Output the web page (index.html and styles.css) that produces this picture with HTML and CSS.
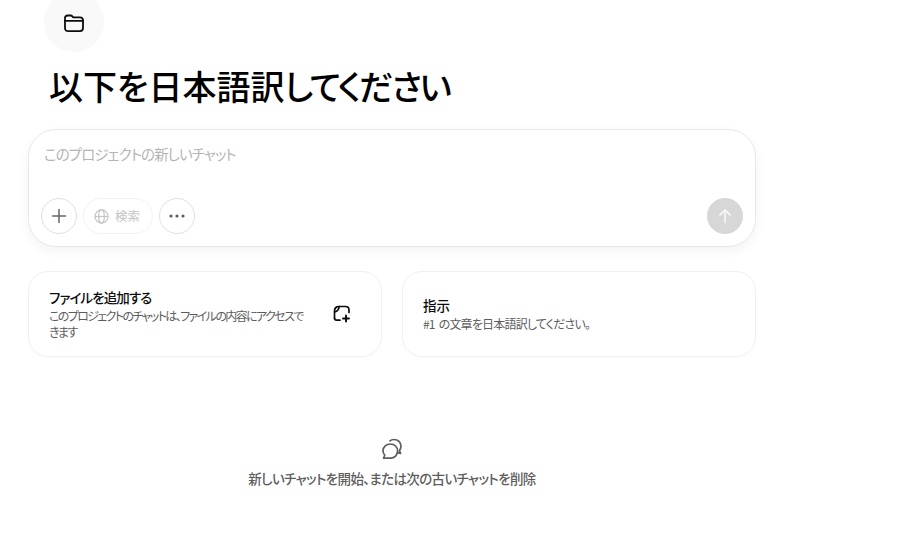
FILE: index.html
```html
<!DOCTYPE html>
<html lang="ja">
<head>
<meta charset="utf-8">
<title>以下を日本語訳してください</title>
<link rel="stylesheet" href="styles.css">
</head>
<body>
<main class="page">
  <div class="project-icon">
    <svg width="20" height="20" viewBox="0 -2.5 20 20" fill="none" stroke="#0d0d0d" stroke-width="1.8" stroke-linejoin="round" stroke-linecap="round"><path d="M1 3.6C1 2 2 1 3.6 1H6.6C7.4 1 7.9 1.3 8.4 1.9L9.2 2.8H16C17.8 2.8 19 4 19 5.8V13.6C19 15.6 17.8 16.6 16 16.6H4C2.2 16.6 1 15.6 1 13.6Z"/><path d="M1 6.4H19"/></svg>
  </div>
  <h1 class="title">以下を日本語訳<span class="kana">してください</span></h1>

  <section class="composer">
    <div class="placeholder">このプロジェクトの新しいチャット</div>
    <div class="toolbar">
      <button class="round-btn">
        <svg width="16" height="16" viewBox="0 0 16 16" fill="none" stroke="#666" stroke-width="1.5" stroke-linecap="round"><path d="M8 1.5V14.5M1.5 8H14.5"/></svg>
      </button>
      <button class="pill-btn">
        <svg width="15" height="15" viewBox="0 0 16 16" fill="none" stroke="#c4c4c4" stroke-width="1.3"><circle cx="8" cy="8" r="7"/><ellipse cx="8" cy="8" rx="3" ry="7"/><path d="M1 8H15"/></svg>
        <span>検索</span>
      </button>
      <button class="round-btn">
        <svg width="16" height="4" viewBox="0 0 16 4" fill="#5d5d5d"><circle cx="2" cy="2" r="1.6"/><circle cx="8" cy="2" r="1.6"/><circle cx="14" cy="2" r="1.6"/></svg>
      </button>
      <button class="send-btn">
        <svg width="16" height="16" viewBox="0 0 16 16" fill="none" stroke="#f4f4f4" stroke-width="1.8" stroke-linecap="round" stroke-linejoin="round"><path d="M8 14.5V2M3 7L8 2L13 7"/></svg>
      </button>
    </div>
  </section>

  <section class="cards">
    <article class="card">
      <div class="card-body">
        <div class="card-title card-title-kana">ファイルを追加する</div>
        <div class="card-text card-text-kana">このプロジェクトのチャットは、ファイルの内容にアクセスできます</div>
      </div>
      <div class="card-icon">
        <svg width="18" height="18" viewBox="0 0 18 18" fill="none" stroke="#0d0d0d" stroke-width="1.7" stroke-linecap="round" stroke-linejoin="round"><path d="M1.5 13V6C1.5 3.5 3.2 1.5 6 1.5H12.5C14.6 1.5 16 2.9 16 5V7.5"/><path d="M1.5 13C1.5 14.4 2.4 15.2 3.6 15.2H7"/><path d="M1.8 7C4 6.5 5.8 4.5 6.2 1.6"/><path d="M13 10.5V16.5M10 13.5H16" stroke-width="1.9"/></svg>
      </div>
    </article>
    <article class="card">
      <div class="card-body">
        <div class="card-title">指示</div>
        <div class="card-text">#1 の文章を日本語訳してください。</div>
      </div>
    </article>
  </section>

  <section class="empty">
    <svg width="22" height="22" viewBox="0 0 22 22" fill="none" stroke="#5d5d5d" stroke-width="1.7" stroke-linecap="round" stroke-linejoin="round"><path d="M9 2.9C10 1.9 11.3 1.5 13 1.5C17 1.5 20 4.4 20 8.2C20 10 19.4 11.5 18.4 12.6L19.6 15.4L16.6 14.7"/><path d="M9.5 6C5.4 6 2 8.9 2 12.7C2 14.4 2.6 15.9 3.7 17L2.6 20.2H9.5C13.6 20.2 16.6 17.2 16.6 13.1C16.6 9 13.6 6 9.5 6Z"/></svg>
    <p class="empty-text">新しいチャットを開始、または次の古いチャットを削除</p>
  </section>
</main>
</body>
</html>
```

FILE: styles.css
```css
* { box-sizing: border-box; }
html, body { margin: 0; height: 100%; background: #fff; overflow: hidden; }
body {
  font-family: "Noto Sans CJK JP", "Liberation Sans", sans-serif;
  font-feature-settings: "palt";
  color: #0d0d0d;
}

.page {
  width: 756px;
  margin-top: -8px;
  padding-left: 28px;
  display: flex;
  flex-direction: column;
}

.project-icon {
  width: 60px;
  height: 60px;
  margin: 0 0 0 16px;
  border-radius: 50%;
  background: #f9f9f9;
  display: flex;
  align-items: center;
  justify-content: center;
}

.title {
  margin: 10px 0 0 21px;
  height: 47px;
  font-size: 34px;
  line-height: 47px;
  font-weight: 500;
  color: #000;
  white-space: nowrap;
}

.kana { letter-spacing: -2.2px; }

.composer {
  margin-top: 20px;
  height: 118px;
  border: 1px solid #e8e8e8;
  border-radius: 28px;
  background: #fff;
  box-shadow: 0 4px 12px rgba(0, 0, 0, .05);
  padding: 12px 12px 12px;
  display: flex;
  flex-direction: column;
  justify-content: space-between;
}

.placeholder {
  margin-left: 3px;
  font-size: 14.5px;
  line-height: 24px;
  letter-spacing: -.9px;
  color: #b4b4b4;
}

.toolbar { display: flex; align-items: center; gap: 6px; }

button { font: inherit; padding: 0; background: #fff; cursor: pointer; }

.round-btn {
  width: 36px;
  height: 36px;
  border: 1px solid #e0e0e0;
  border-radius: 50%;
  display: flex;
  align-items: center;
  justify-content: center;
}

.pill-btn {
  width: 70px;
  height: 36px;
  padding-left: 10px;
  border: 1px solid #f3f3f3;
  border-radius: 18px;
  display: flex;
  align-items: center;
  gap: 6px;
  font-size: 12.5px;
  line-height: 16px;
  color: #c4c4c4;
}

.send-btn {
  width: 36px;
  height: 36px;
  margin-left: auto;
  border: 0;
  border-radius: 50%;
  background: #d7d7d7;
  display: flex;
  align-items: center;
  justify-content: center;
}

.cards {
  margin-top: 24px;
  display: grid;
  grid-template-columns: 354px 354px;
  gap: 20px;
}

.card {
  height: 86px;
  border: 1px solid #f0f0f0;
  border-radius: 20px;
  box-shadow: 0 1px 3px rgba(0, 0, 0, .02);
  padding: 0 20px;
  display: flex;
  align-items: center;
  gap: 22px;
}

.card-body { flex: 1; min-width: 0; }

.card-title {
  margin-bottom: 2px;
  font-size: 13.5px;
  line-height: 18px;
  font-weight: 500;
  color: #0d0d0d;
}

.card-title-kana { letter-spacing: -.9px; }

.card-text {
  font-size: 12px;
  line-height: 16px;
  letter-spacing: -.8px;
  word-spacing: 2px;
  color: #5d5d5d;
}

.card-text-kana { letter-spacing: -1.6px; }

.card-icon { flex: none; width: 20px; height: 20px; margin-right: 8px; }

.empty {
  margin-top: 81px;
  display: flex;
  flex-direction: column;
  align-items: center;
  gap: 8px;
}

.empty-text {
  margin: 0;
  font-size: 13.5px;
  line-height: 20px;
  letter-spacing: -.64px;
  font-weight: 500;
  color: #5d5d5d;
}
```
